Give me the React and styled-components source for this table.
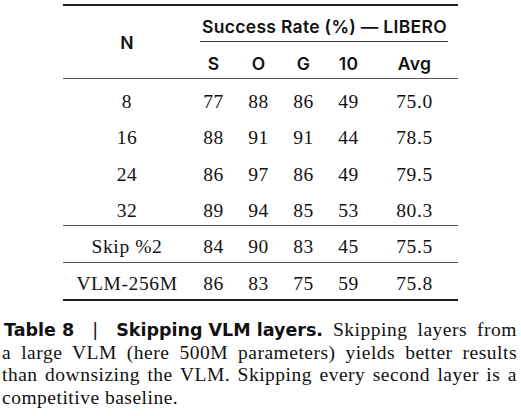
import React from 'react';
import styled, { createGlobalStyle } from 'styled-components';

const GlobalStyle = createGlobalStyle`
  html, body {
    margin: 0;
    padding: 0;
    background: #ffffff;
  }
  body {
    width: 521px;
    height: 416px;
    overflow: hidden;
    color: #111111;
  }
`;

const COLS = '128px 45px 45px 45px 45px 87px';

const Page = styled.div`
  display: flex;
  flex-direction: column;
  width: 521px;
  padding-top: 4px;
`;

const Table = styled.div`
  width: 395px;
  margin: 0 auto;
  display: flex;
  flex-direction: column;
`;

const Rule = styled.div`
  height: ${({ heavy }) => (heavy ? '2px' : '1px')};
  background: ${({ heavy }) => (heavy ? '#1e1e1e' : '#555555')};
`;

const Head = styled.div`
  display: grid;
  grid-template-columns: ${COLS};
  grid-template-rows: 35px 1px 36px;
  font-family: Inter, 'Noto Sans', sans-serif;
  font-weight: 600;
  font-size: 17.5px;
  letter-spacing: 0.3px;
  color: #111;
`;

const NCell = styled.div`
  grid-column: 1;
  grid-row: 1 / 4;
  display: flex;
  align-items: center;
  justify-content: center;
`;

const GroupTitle = styled.div`
  grid-column: 2 / 7;
  grid-row: 1;
  padding-top: 7px;
  line-height: 28px;
  text-align: center;
  white-space: nowrap;
`;

const CMidRule = styled.div`
  grid-column: 2 / 7;
  grid-row: 2;
  margin: 0 10px 0 9px;
  background: #333;
`;

const SubHead = styled.div`
  grid-row: 3;
  grid-column: ${({ col }) => col};
  padding-top: 8px;
  line-height: 28px;
  text-align: center;
`;

const Body = styled.div`
  display: flex;
  flex-direction: column;
`;

const Row = styled.div`
  display: grid;
  grid-template-columns: ${COLS};
  height: ${({ h }) => h}px;
  padding-top: ${({ pad }) => pad}px;
  box-sizing: border-box;
  font-family: 'Liberation Serif', 'Times New Roman', serif;
  font-size: 19.5px;
  letter-spacing: 0.6px;
  line-height: ${({ h, pad }) => h - pad}px;
  color: #111;
`;

const Cell = styled.div`
  text-align: center;
  white-space: nowrap;
`;

const Caption = styled.div`
  margin-top: 18px;
  padding: 0 4px 0 2px;
  font-family: 'Liberation Serif', 'Times New Roman', serif;
  font-size: 19.5px;
  letter-spacing: 0.5px;
  line-height: 22.7px;
  color: #111;
`;

const CaptionLine = styled.div`
  display: flex;
  align-items: baseline;
  white-space: nowrap;
`;

const Text = styled.span`
  flex: 1;
  text-align: justify;
  text-align-last: ${({ last }) => (last ? 'left' : 'justify')};
  margin-left: ${({ indent }) => indent || 0}px;
`;

const Label = styled.span`
  padding-left: 2px;
  font-family: 'DejaVu Sans', 'Liberation Sans', sans-serif;
  font-weight: 700;
  font-size: 17.5px;
  letter-spacing: 0;
`;

const Sep = styled.span`
  display: inline-block;
  width: 42px;
  text-align: center;
  font-weight: 400;
`;

const main = [
  ['8', '77', '88', '86', '49', '75.0'],
  ['16', '88', '91', '91', '44', '78.5'],
  ['24', '86', '97', '86', '49', '79.5'],
  ['32', '89', '94', '85', '53', '80.3'],
];

const DataRow = ({ cells, h, pad }) => (
  <Row h={h} pad={pad}>
    {cells.map((c, i) => (
      <Cell key={i}>{c}</Cell>
    ))}
  </Row>
);

export default function App() {
  return (
    <Page>
      <GlobalStyle />
      <Table>
        <Rule heavy />
        <Head>
          <NCell>N</NCell>
          <GroupTitle>Success Rate (%) — LIBERO</GroupTitle>
          <CMidRule />
          <SubHead col={2}>S</SubHead>
          <SubHead col={3}>O</SubHead>
          <SubHead col={4}>G</SubHead>
          <SubHead col={5}>10</SubHead>
          <SubHead col={6}>Avg</SubHead>
        </Head>
        <Rule />
        <Body>
          {main.map((r) => (
            <DataRow key={r[0]} cells={r} h={36.5} pad={7.5} />
          ))}
        </Body>
        <Rule />
        <DataRow cells={['Skip %2', '84', '90', '83', '45', '75.5']} h={36} pad={6} />
        <Rule />
        <DataRow cells={['VLM-256M', '86', '83', '75', '59', '75.8']} h={36} pad={6} />
        <Rule heavy />
      </Table>
      <Caption>
        <CaptionLine>
          <Label>
            Table 8<Sep>|</Sep>Skipping VLM layers.
          </Label>
          <Text indent={10}>Skipping layers from</Text>
        </CaptionLine>
        <CaptionLine>
          <Text>a large VLM (here 500M parameters) yields better results</Text>
        </CaptionLine>
        <CaptionLine>
          <Text>than downsizing the VLM. Skipping every second layer is a</Text>
        </CaptionLine>
        <CaptionLine>
          <Text last>competitive baseline.</Text>
        </CaptionLine>
      </Caption>
    </Page>
  );
}
